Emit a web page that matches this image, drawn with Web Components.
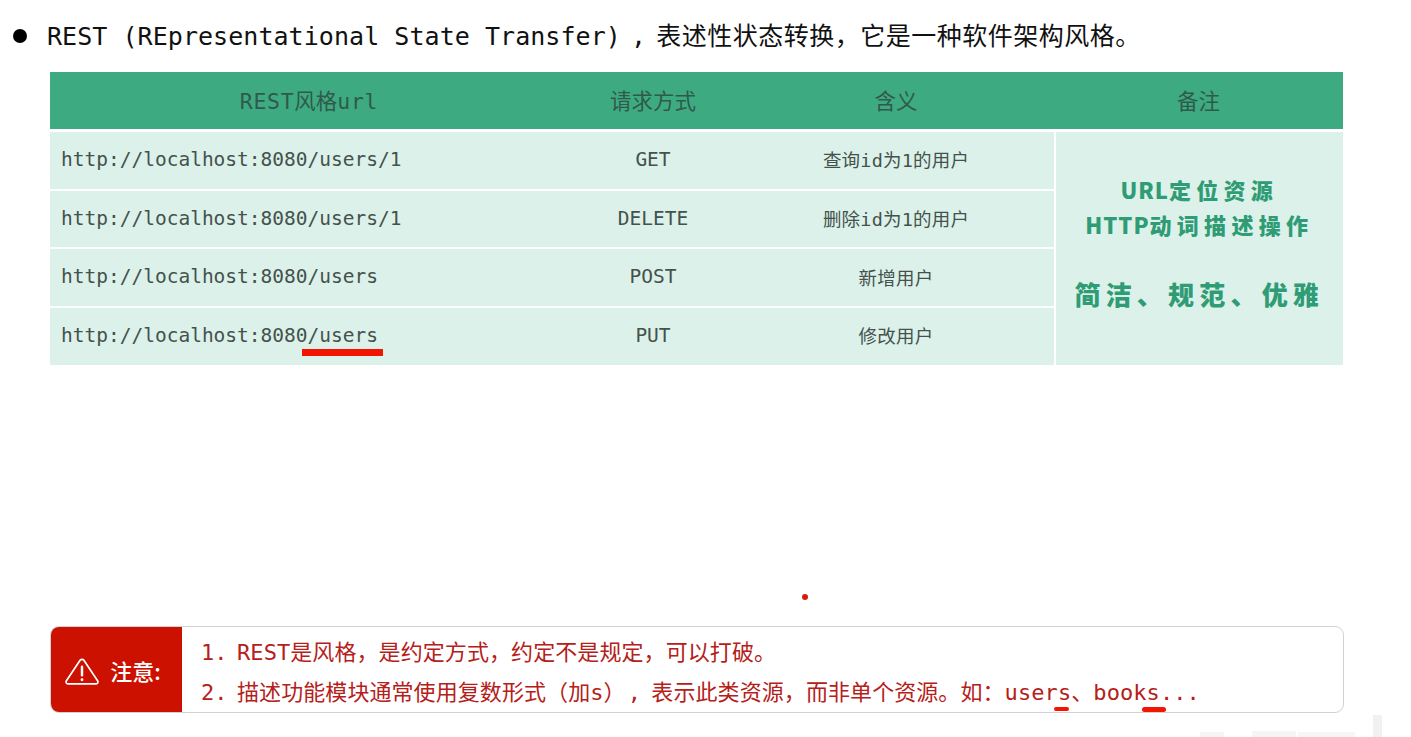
<!DOCTYPE html>
<html lang="zh">
<head>
<meta charset="utf-8">
<title>REST</title>
<style>
  html, body { margin: 0; background: #fff; }
  body { width: 1411px; height: 737px; overflow: hidden; position: relative; font-family: "DejaVu Sans Mono", "Noto Sans CJK SC", monospace; }
  rest-title .sep { word-spacing: -5px; }
  rest-title .cjk { letter-spacing: 0.5px; }
</style>
</head>
<body>
<rest-title>REST (REpresentational State Transfer)<span class="sep"> , </span><span class="cjk">表述性状态转换，它是一种软件架构风格。</span></rest-title>
<rest-table>
  <rest-row url="http://localhost:8080/users/1" method="GET" meaning="查询id为1的用户"></rest-row>
  <rest-row url="http://localhost:8080/users/1" method="DELETE" meaning="删除id为1的用户"></rest-row>
  <rest-row url="http://localhost:8080/users" method="POST" meaning="新增用户"></rest-row>
  <rest-row url="http://localhost:8080/users" method="PUT" meaning="修改用户" mark></rest-row>
</rest-table>
<note-box></note-box>
<pen-marks></pen-marks>

<script>
const MONO = '"DejaVu Sans Mono", "Noto Sans CJK SC", monospace';

class RestTitle extends HTMLElement {
    constructor() {
        super();
        this.attachShadow({ mode: "open" });
        this.shadowRoot.innerHTML = `
            <style>
                :host {
                    display: flex;
                    align-items: center;
                    gap: 20px;
                    height: 72px;
                    padding-left: 13px;
                    box-sizing: border-box;
                    color: #111;
                    font: 25px ${MONO};
                    white-space: nowrap;
                }
                .dot { width: 14px; height: 14px; border-radius: 50%; background: #000; flex: none; }
                .text { letter-spacing: 0.05px; margin-top: -4px; }
            </style>
            <span class="dot"></span>
            <span class="text"><slot></slot></span>
        `;
    }
}

class RestTable extends HTMLElement {
    constructor() {
        super();
        this.attachShadow({ mode: "open" });
        this.shadowRoot.innerHTML = `
            <style>
                :host {
                    display: block;
                    width: 1293px;
                    margin-left: 50px;
                    font: 19.5px ${MONO};
                    color: #44524d;
                }
                .head {
                    display: grid;
                    grid-template-columns: 518px 170px 316px 289px;
                    height: 60px;
                    box-sizing: border-box;
                    padding-bottom: 3px;
                    background: #3eaa82;
                    color: #2f5a4b;
                    font-size: 21.5px;
                    align-items: center;
                    text-align: center;
                    border-bottom: 3px solid #fff;
                }
                .head b { font-weight: normal; letter-spacing: 0.7px; }
                .body { display: grid; grid-template-columns: 1004px 289px; }
                .rows { display: flex; flex-direction: column; gap: 2px; }
                .remark {
                    background: #dcf1e9;
                    margin-left: 1.5px;
                    padding-bottom: 13px;
                    box-sizing: border-box;
                    display: flex;
                    flex-direction: column;
                    align-items: center;
                    justify-content: center;
                    color: #2f9c76;
                    font: 900 22px "Noto Sans CJK SC", sans-serif;
                    line-height: 35px;
                    white-space: nowrap;
                    letter-spacing: 5.3px;
                }
                .remark b { font-weight: inherit; letter-spacing: 1px; }
                .remark .big { font-size: 26px; margin-top: 34px; letter-spacing: 5.2px; }
            </style>
            <div class="head"><span><b>REST</b>风格<b>url</b></span><span>请求方式</span><span>含义</span><span>备注</span></div>
            <div class="body">
                <div class="rows"><slot></slot></div>
                <div class="remark">
                    <span><b>URL</b>定位资源</span>
                    <span><b>HTTP</b>动词描述操作</span>
                    <span class="big">简洁、规范、优雅</span>
                </div>
            </div>
        `;
    }
}

class RestRow extends HTMLElement {
    constructor() {
        super();
        this.attachShadow({ mode: "open" });
        this.shadowRoot.innerHTML = `
            <style>
                :host {
                    display: grid;
                    grid-template-columns: 518px 170px 316px;
                    height: 56.7px;
                    box-sizing: border-box;
                    padding-bottom: 2px;
                    align-items: center;
                    text-align: center;
                    background: #dcf1e9;
                }
                .url { text-align: left; padding-left: 11px; position: relative; }
                .meaning { font-size: 18.5px; letter-spacing: 0.2px; }
                .mark {
                    position: absolute;
                    left: 252px;
                    top: 25.5px;
                    width: 81px;
                    height: 7px;
                    background: #f21500;
                }
            </style>
            <span class="url"></span><span class="method"></span><span class="meaning"></span>
        `;
    }

    connectedCallback() {
        this.shadowRoot.querySelector(".url").textContent = this.getAttribute("url");
        this.shadowRoot.querySelector(".method").textContent = this.getAttribute("method");
        this.shadowRoot.querySelector(".meaning").textContent = this.getAttribute("meaning");
        if (this.hasAttribute("mark")) {
            const mark = document.createElement("span");
            mark.className = "mark";
            this.shadowRoot.querySelector(".url").append(mark);
        }
    }
}

class NoteBox extends HTMLElement {
    constructor() {
        super();
        this.attachShadow({ mode: "open" });
        this.shadowRoot.innerHTML = `
            <style>
                :host {
                    display: flex;
                    width: 1294px;
                    height: 87px;
                    margin: 261px 0 0 50px;
                    box-sizing: border-box;
                    border: 1px solid #d2d2d2;
                    border-radius: 9px;
                    overflow: hidden;
                    color: #b5201a;
                    font: 22px ${MONO};
                }
                .label {
                    width: 132px;
                    margin: -1px 0 -1px -1px;
                    background: #cc1100;
                    color: #fff;
                    display: flex;
                    align-items: center;
                    justify-content: center;
                    gap: 10px;
                    font: 500 22px "Noto Sans CJK SC", sans-serif;
                    flex: none;
                    padding: 5px 7px 0 0;
                    box-sizing: border-box;
                }
                .label span { margin-top: -4px; }
                svg { width: 36px; height: 29px; flex: none; }
                .lines {
                    display: flex;
                    flex-direction: column;
                    justify-content: center;
                    padding: 7px 0 0 19px;
                    line-height: 40px;
                    white-space: nowrap;
                    word-spacing: -4px;
                    letter-spacing: 0.08px;
                }
                .sep { padding-left: 2px; word-spacing: -3px; }
            </style>
            <div class="label">
                <svg viewBox="0 0 38 30" fill="none" stroke="#fff" stroke-width="1.8" stroke-linejoin="round" stroke-linecap="round">
                    <path d="M17 3.2 a2.4 2.4 0 0 1 4 0 L35.6 25 a2 2 0 0 1 -1.7 3 H4.1 a2 2 0 0 1 -1.7 -3 Z"/>
                    <path d="M19 10 V19" stroke-width="2.6"/>
                    <path d="M19 23.6 V23.8" stroke-width="3"/>
                </svg>
                <span>注意:</span>
            </div>
            <div class="lines">
                <span>1. REST是风格，是约定方式，约定不是规定，可以打破。</span>
                <span>2. 描述功能模块通常使用复数形式（加s）<span class="sep">, </span>表示此类资源，而非单个资源。如：users、books...</span>
            </div>
        `;
    }
}

// hand drawn marks and the bits of video overlay lying over the slide
class PenMarks extends HTMLElement {
    constructor() {
        super();
        this.attachShadow({ mode: "open" });
        this.shadowRoot.innerHTML = `
            <style>
                :host { display: block; position: absolute; inset: 0; pointer-events: none; }
                i { position: absolute; display: block; background: #f21500; }
                .dot { left: 802px; top: 594px; width: 6px; height: 6px; border-radius: 50%; background: #d81c10; }
                .s1 { left: 1054px; top: 707px; width: 15px; height: 4px; border-radius: 2px; }
                .s2 { left: 1142px; top: 707px; width: 24px; height: 5px; border-radius: 3px; }
                .w1 { left: 1373px; top: 715px; width: 9px; height: 22px; background: #f1f1f1; }
                .w2 { left: 1200px; top: 732px; width: 24px; height: 5px; background: #f5f5f5; }
                .w3 { left: 1252px; top: 731px; width: 44px; height: 6px; background: #f5f5f5; }
                .w4 { left: 1298px; top: 732px; width: 57px; height: 5px; background: #f6f6f6; }
            </style>
            <i class="dot"></i><i class="s1"></i><i class="s2"></i><i class="w1"></i><i class="w2"></i><i class="w3"></i><i class="w4"></i>
        `;
    }
}

customElements.define("rest-title", RestTitle);
customElements.define("rest-table", RestTable);
customElements.define("rest-row", RestRow);
customElements.define("note-box", NoteBox);
customElements.define("pen-marks", PenMarks);
</script>
</body>
</html>
